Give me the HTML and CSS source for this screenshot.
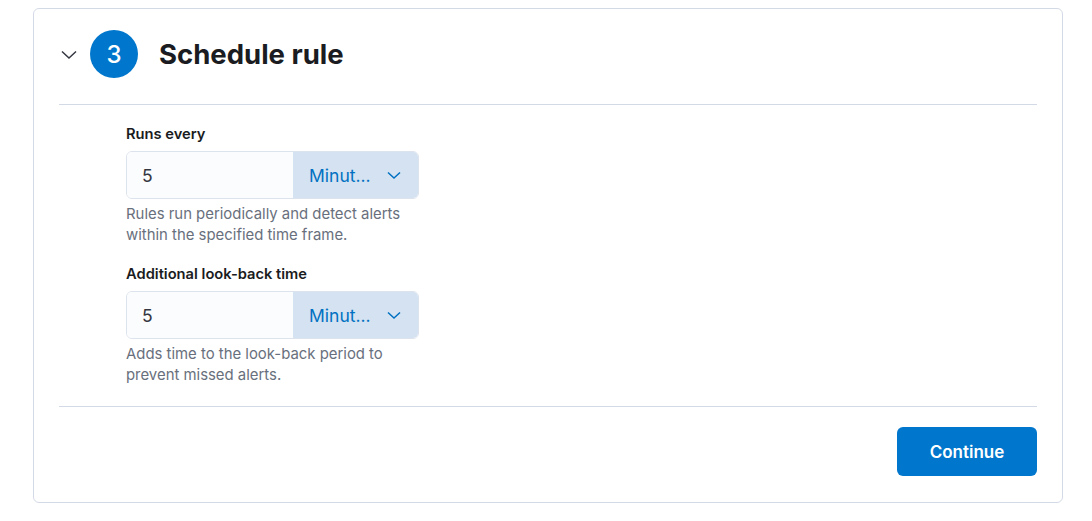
FILE: index.html
```html
<!DOCTYPE html>
<html>
<head>
<meta charset="utf-8">
<link rel="stylesheet" href="styles.css">
</head>
<body>
<div class="card">
  <div class="header">
    <svg class="toggle" width="16" height="16" viewBox="0 0 16 16"><path d="M1 5.5 L8 12 L15 5.5" fill="none" stroke="#343741" stroke-width="1.5"/></svg>
    <div class="step">3</div>
    <h2 class="title">Schedule rule</h2>
  </div>
  <div class="body">
    <div class="field">
      <label class="label">Runs every</label>
      <div class="control">
        <div class="num">5</div>
        <div class="unit"><span>Minut...</span><svg width="14" height="14" viewBox="0 0 14 14"><path d="M1 4.5 L7 10 L13 4.5" fill="none" stroke="#0071c2" stroke-width="1.5"/></svg></div>
      </div>
      <p class="help">Rules run periodically and detect alerts<br>within the specified time frame.</p>
    </div>
    <div class="field">
      <label class="label">Additional look-back time</label>
      <div class="control">
        <div class="num">5</div>
        <div class="unit"><span>Minut...</span><svg width="14" height="14" viewBox="0 0 14 14"><path d="M1 4.5 L7 10 L13 4.5" fill="none" stroke="#0071c2" stroke-width="1.5"/></svg></div>
      </div>
      <p class="help">Adds time to the look-back period to<br>prevent missed alerts.</p>
    </div>
  </div>
  <div class="footer">
    <button class="continue">Continue</button>
  </div>
</div>
</body>
</html>
```
FILE: styles.css
```css
* { box-sizing: border-box; }
body {
  margin: 0;
  background: #fff;
  font-family: Inter, "Noto Sans", sans-serif;
  color: #1a1c21;
}
.card {
  margin: 8px 0 0 33px;
  width: 1030px;
  border: 1px solid #d3dae6;
  border-radius: 6px;
  padding: 0 25px;
}
.header {
  display: flex;
  align-items: center;
  padding: 21px 0 26px;
  border-bottom: 1px solid #d3dae6;
}
.toggle { margin-left: 2px; display: block; }
.step {
  width: 48px;
  height: 48px;
  border-radius: 50%;
  background: #0077cc;
  color: #fff;
  font-size: 24px;
  font-weight: 500;
  display: flex;
  align-items: center;
  justify-content: center;
  margin-left: 13px;
}
.title {
  margin: 0 0 0 21px;
  font-size: 27.5px;
  font-weight: 700;
  line-height: 34px;
  color: #1a1c21;
}
.body {
  padding: 19px 0 20px 67px;
  border-bottom: 1px solid #d3dae6;
}
.field + .field { margin-top: 18px; }
.label {
  display: block;
  font-size: 14.7px;
  font-weight: 600;
  line-height: 20px;
  color: #1a1c21;
  margin-bottom: 7px;
}
.control {
  display: flex;
  width: 293px;
  height: 48px;
  border: 1px solid #dde3ec;
  border-radius: 6px;
  overflow: hidden;
}
.num {
  flex: 1;
  background: #fbfcfd;
  padding-left: 15px;
  display: flex;
  align-items: center;
  font-size: 17.5px;
  color: #343741;
}
.unit {
  width: 125px;
  background: #d4e2f1;
  display: flex;
  align-items: center;
  justify-content: space-between;
  padding: 0 17px 0 16px;
  font-size: 17.5px;
  color: #0071c2;
}
.unit svg { display: block; }
.help {
  margin: 5px 0 0;
  font-size: 14.9px;
  line-height: 21px;
  color: #69707d;
}
.footer {
  display: flex;
  justify-content: flex-end;
  padding: 20px 0 26px;
}
.continue {
  width: 140px;
  height: 49px;
  border: none;
  border-radius: 6px;
  background: #0077cc;
  color: #fff;
  font-family: Inter, "Noto Sans", sans-serif;
  font-size: 17px;
  font-weight: 600;
}
```
